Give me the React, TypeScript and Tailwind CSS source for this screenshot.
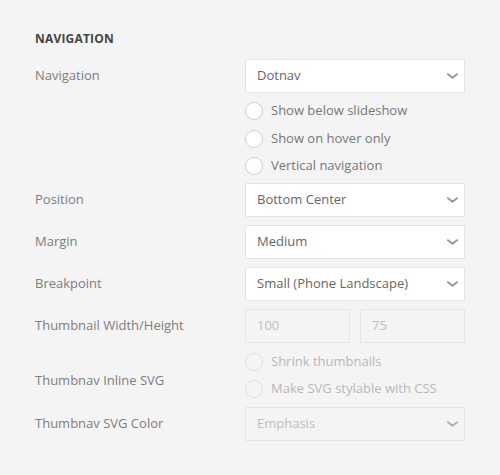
import { ReactNode } from 'react';

const Chevron = ({ disabled }: { disabled?: boolean }) => (
  <svg width="11" height="6" viewBox="0 0 11 6" fill="none" className="shrink-0">
    <path
      d="M1 1.2l4.5 3.6L10 1.2"
      stroke={disabled ? '#b0b0b0' : '#999'}
      strokeWidth="2"
      strokeLinecap="round"
      strokeLinejoin="round"
    />
  </svg>
);

const Select = ({ value, disabled }: { value: string; disabled?: boolean }) => (
  <div
    className={`h-[34px] w-full flex items-center justify-between pl-[11px] pr-[6px] border border-[#e5e5e5] text-[13px] ${
      disabled ? 'bg-[#f4f4f4] text-[#bdbdbd]' : 'bg-white text-[#666]'
    }`}
  >
    <span>{value}</span>
    <Chevron disabled={disabled} />
  </div>
);

const Radio = ({ label, disabled }: { label: string; disabled?: boolean }) => (
  <div className="h-[18px] flex items-center gap-[8px]">
    <span
      className={`w-[18px] h-[18px] rounded-full border ${
        disabled ? 'border-[#dedede] bg-transparent' : 'border-[#cfcfcf] bg-white'
      }`}
    />
    <span className={`text-[13px] ${disabled ? 'text-[#b8b8b8]' : 'text-[#777]'}`}>{label}</span>
  </div>
);

const Row = ({
  label,
  children,
  className = 'mt-[8px]',
  labelClass = 'h-[34px]',
}: {
  label: string;
  children: ReactNode;
  className?: string;
  labelClass?: string;
}) => (
  <div className={`flex items-start ${className}`}>
    <div className={`w-[210px] shrink-0 flex items-center text-[13px] text-[#7d7d7d] ${labelClass}`}>{label}</div>
    <div className="w-[220px] flex flex-col">{children}</div>
  </div>
);

export default function App() {
  return (
    <div
      className="w-[500px] h-[475px] bg-[#f4f4f4] px-[35px] pt-[31px]"
      style={{ fontFamily: '"Open Sans", sans-serif' }}
    >
      <h3 className="text-[12px] font-bold tracking-[0.2px] text-[#444] uppercase leading-[16px]">Navigation</h3>

      <div className="mt-[4px] flex flex-col">
        <Row label="Navigation">
          <Select value="Dotnav" />
          <div className="mt-[9px] flex flex-col gap-[9.5px]">
            <Radio label="Show below slideshow" />
            <Radio label="Show on hover only" />
            <Radio label="Vertical navigation" />
          </div>
        </Row>

        <Row label="Position">
          <Select value="Bottom Center" />
        </Row>

        <Row label="Margin">
          <Select value="Medium" />
        </Row>

        <Row label="Breakpoint">
          <Select value="Small (Phone Landscape)" />
        </Row>

        <Row label="Thumbnail Width/Height">
          <div className="flex gap-[10px]">
            <div className="h-[34px] flex-1 flex items-center px-[11px] border border-[#e5e5e5] text-[13px] text-[#bdbdbd]">
              100
            </div>
            <div className="h-[34px] flex-1 flex items-center px-[11px] border border-[#e5e5e5] text-[13px] text-[#bdbdbd]">
              75
            </div>
          </div>
          <div className="mt-[10px]">
            <Radio label="Shrink thumbnails" disabled />
          </div>
        </Row>

        <Row label="Thumbnav Inline SVG" className="mt-[9px]" labelClass="h-[18px] -mt-[8px]">
          <Radio label="Make SVG stylable with CSS" disabled />
        </Row>

        <Row label="Thumbnav SVG Color" className="mt-[9px]">
          <Select value="Emphasis" disabled />
        </Row>
      </div>
    </div>
  );
}
